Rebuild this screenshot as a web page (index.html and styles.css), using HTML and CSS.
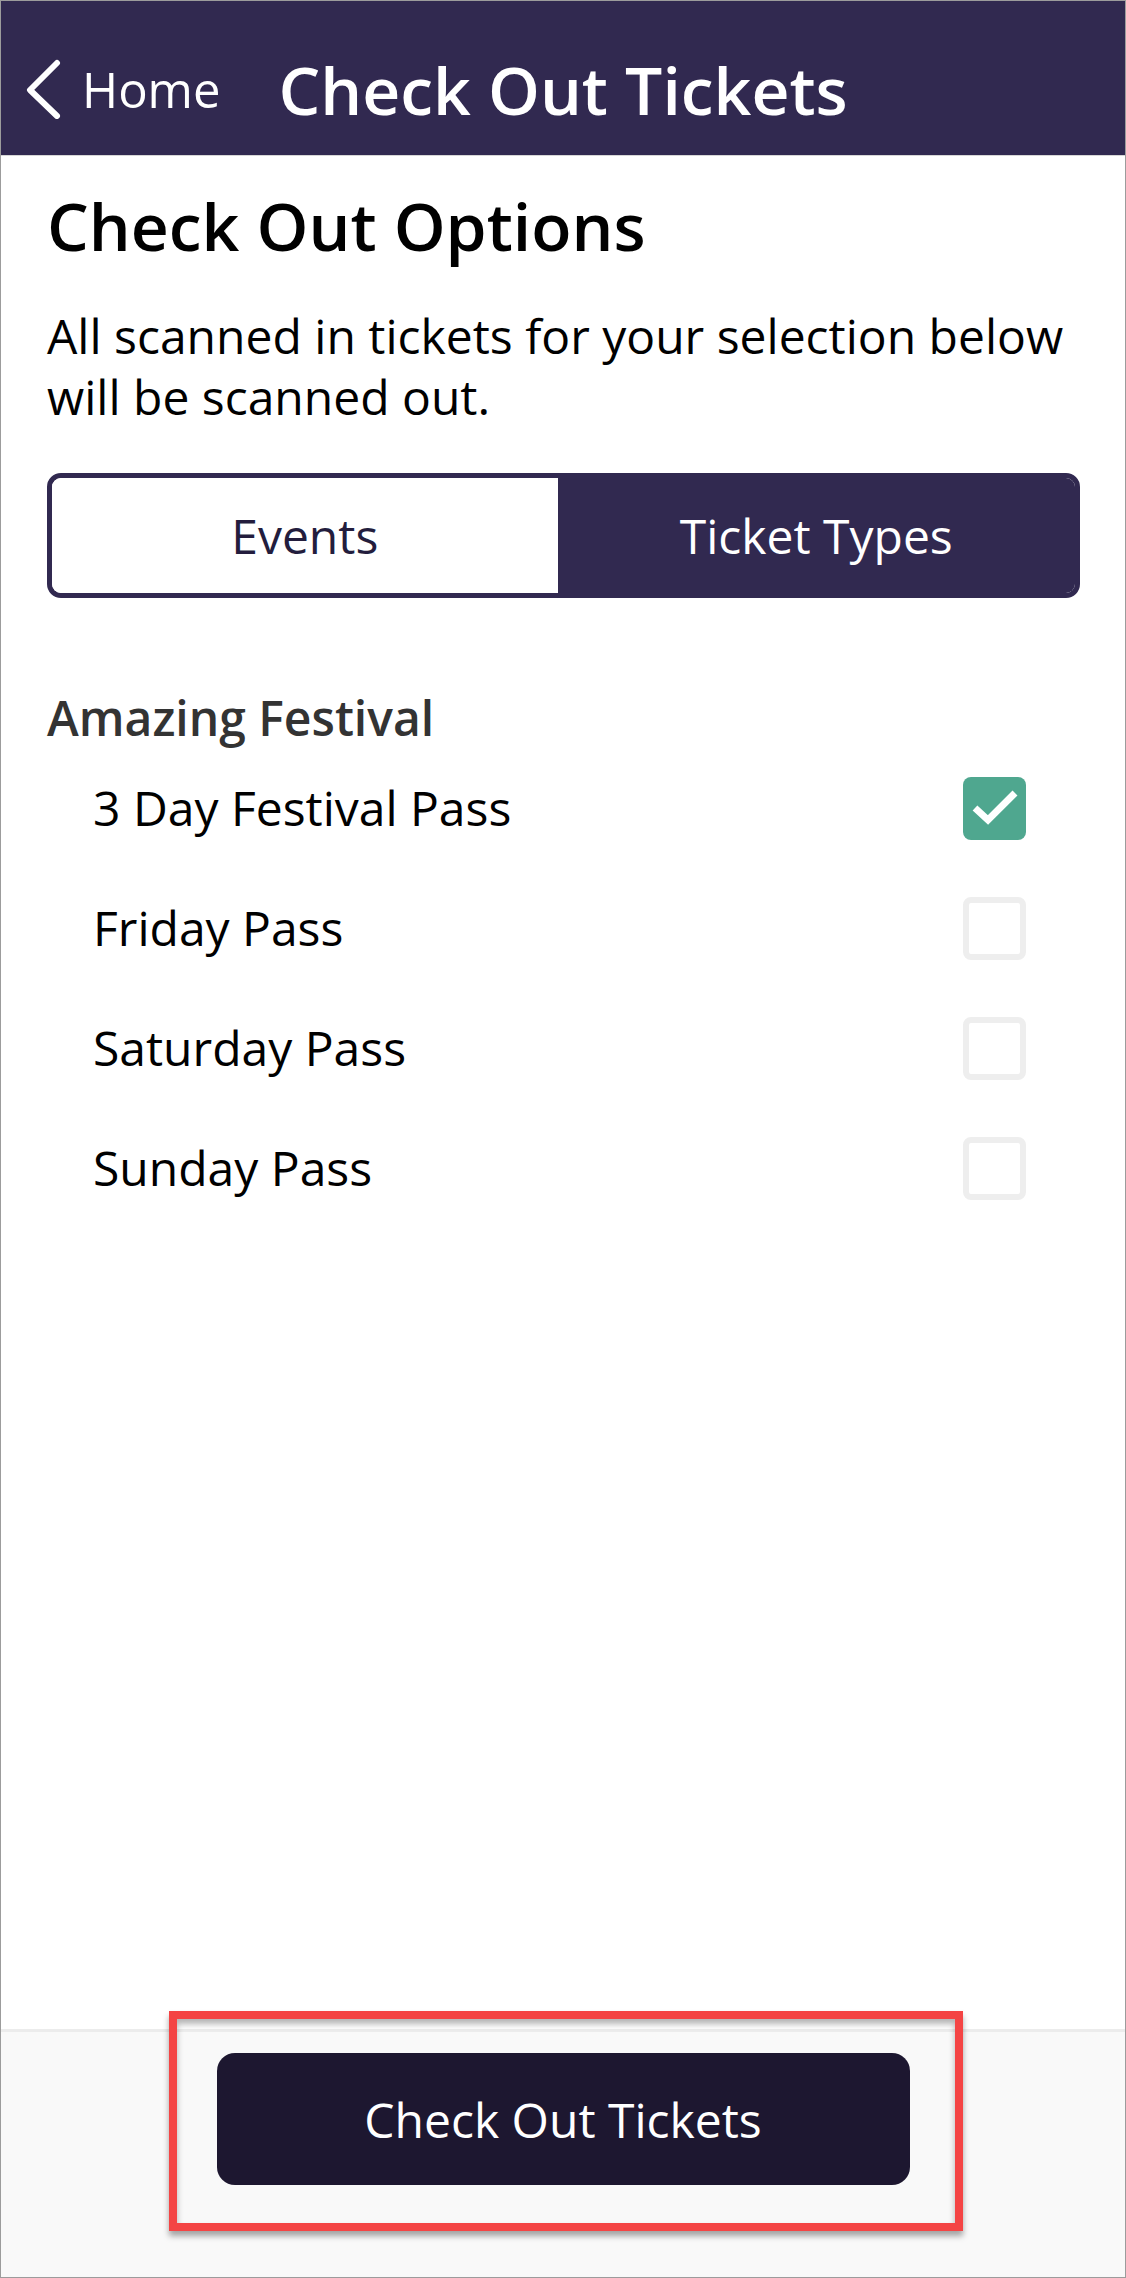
FILE: index.html
```html
<!DOCTYPE html>
<html lang="en">
<head>
    <meta charset="UTF-8">
    <title>Check Out Tickets</title>
    <link rel="stylesheet" href="styles.css">
</head>
<body>
<div class="screen">
    <header class="nav-bar">
        <a class="back-link" href="#">
            <svg class="back-icon" width="36" height="60" viewBox="0 0 36 60">
                <path d="M32 4 L5 31 L32 57" fill="none" stroke="#fff" stroke-width="6" stroke-linecap="round" stroke-linejoin="round"/>
            </svg>
            <span>Home</span>
        </a>
        <h1 class="nav-title">Check Out Tickets</h1>
    </header>

    <main class="content">
        <h2 class="page-title">Check Out Options</h2>
        <p class="intro">All scanned in tickets for your selection below will be scanned out.</p>

        <div class="segmented">
            <button class="segment">Events</button>
            <button class="segment active">Ticket Types</button>
        </div>

        <h3 class="group-title">Amazing Festival</h3>
        <ul class="ticket-list">
            <li class="ticket-row">
                <span>3 Day Festival Pass</span>
                <span class="checkbox checked">
                    <svg width="62" height="62" viewBox="0 0 62 62">
                        <path d="M11 31 L24 43 L51 16" fill="none" stroke="#fff" stroke-width="7"/>
                    </svg>
                </span>
            </li>
            <li class="ticket-row">
                <span>Friday Pass</span>
                <span class="checkbox"></span>
            </li>
            <li class="ticket-row">
                <span>Saturday Pass</span>
                <span class="checkbox"></span>
            </li>
            <li class="ticket-row">
                <span>Sunday Pass</span>
                <span class="checkbox"></span>
            </li>
        </ul>
    </main>

    <footer class="action-bar">
        <button class="primary-btn">Check Out Tickets</button>
        <div class="highlight"></div>
    </footer>
</div>
</body>
</html>
```

FILE: styles.css
```css
* {
    box-sizing: border-box;
}

body {
    margin: 0;
    font-family: "Open Sans", "Noto Sans", sans-serif;
    background: #fff;
}

.screen {
    width: 1126px;
    height: 2278px;
    border: 1px solid #9c9c9c;
    display: flex;
    flex-direction: column;
}

.nav-bar {
    height: 155px;
    flex-shrink: 0;
    background-color: #312950;
    border-bottom: 1px solid #d6d6d6;
    display: flex;
    align-items: center;
    padding: 22px 0 0 24px;
    gap: 58px;
}

.back-link {
    display: flex;
    align-items: center;
    gap: 21px;
    color: #fff;
    text-decoration: none;
    font-size: 49px;
    line-height: 64px;
}

.nav-title {
    margin: 0;
    color: #fff;
    font-size: 66px;
    font-weight: 600;
    line-height: 80px;
}

.content {
    flex: 1;
    padding: 27px 45px 0 46px;
}

.page-title {
    margin: 0;
    font-size: 66px;
    font-weight: 600;
    line-height: 84px;
    color: #000;
}

.intro {
    margin: 38px 0 0 0;
    font-size: 48px;
    line-height: 61px;
    color: #000;
}

.segmented {
    margin-top: 46px;
    height: 125px;
    display: grid;
    grid-template-columns: 506fr 518fr;
    border: 5px solid #312950;
    border-radius: 14px;
    overflow: hidden;
}

.segment {
    border: none;
    background: #fff;
    font-family: inherit;
    font-size: 48px;
    color: #231d3d;
    padding: 0;
}

.segment.active {
    background: #312950;
    color: #fff;
}

.group-title {
    margin: 88px 0 0 0;
    font-size: 48px;
    font-weight: 600;
    line-height: 64px;
    color: #333;
}

.ticket-list {
    list-style: none;
    margin: 0;
    padding: 0;
}

.ticket-row {
    height: 120px;
    display: flex;
    align-items: center;
    justify-content: space-between;
    padding: 0 54px 4px 46px;
    font-size: 48px;
    line-height: 64px;
    color: #000;
}

.checkbox {
    width: 63px;
    height: 63px;
    border: 6px solid #eeeeee;
    border-radius: 8px;
    display: flex;
    align-items: center;
    justify-content: center;
}

.checkbox.checked {
    background: #4fa78f;
    border: none;
}

.action-bar {
    height: 248px;
    flex-shrink: 0;
    position: relative;
    background: #f9f9f9;
    border-top: 3px solid #ececec;
    display: flex;
    justify-content: center;
    padding-top: 21px;
}

.primary-btn {
    width: 693px;
    height: 132px;
    border: none;
    border-radius: 18px;
    background: #1d1730;
    color: #fff;
    font-family: inherit;
    font-size: 48px;
}

.highlight {
    position: absolute;
    left: 168px;
    top: -21px;
    width: 794px;
    height: 220px;
    border: 8px solid #f44444;
    box-shadow: 0 5px 6px rgba(0, 0, 0, 0.35), inset 0 5px 6px rgba(0, 0, 0, 0.3);
}
```
